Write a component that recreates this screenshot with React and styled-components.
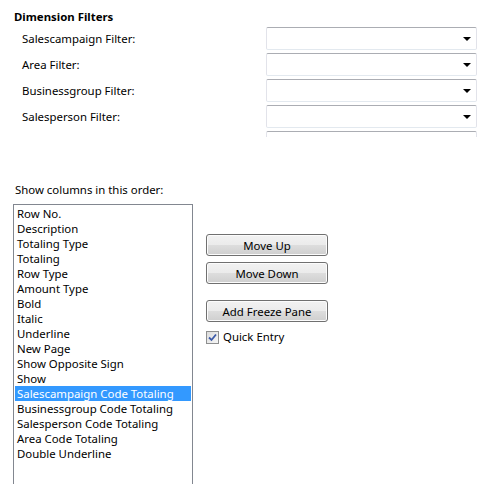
import React from "react";
import styled, { createGlobalStyle } from "styled-components";

const GlobalStyle = createGlobalStyle`
  html, body {
    margin: 0;
    padding: 0;
    background: #ffffff;
  }
  body {
    font-family: "Noto Sans", "Liberation Sans", sans-serif;
    font-size: 11.4px;
    color: #000000;
  }
`;

const Page = styled.div`
  width: 497px;
  height: 484px;
  overflow: hidden;
  position: relative;
`;

const Heading = styled.div`
  font-weight: bold;
  line-height: 16px;
  padding: 9px 0 0 14px;
`;

const FilterList = styled.div`
  display: flex;
  flex-direction: column;
  gap: 3px;
  margin-top: 2px;
`;

const FilterRow = styled.div`
  display: grid;
  grid-template-columns: 244px 211px;
  padding-left: 22px;
  height: ${(p) => (p.$clipped ? "6px" : "23px")};
  overflow: hidden;
  align-items: ${(p) => (p.$clipped ? "start" : "center")};
`;

const Label = styled.span`
  line-height: 16px;
`;

const SelectBox = styled.div`
  box-sizing: border-box;
  height: 23px;
  border: 1px solid #e2e3ea;
  border-top-color: #abadb3;
  border-bottom-color: #e3e9ef;
  border-radius: 2px;
  background: #ffffff;
  display: flex;
  align-items: center;
  justify-content: flex-end;
  padding-right: 5px;
`;

const Arrow = styled.span`
  width: 0;
  height: 0;
  border-left: 4px solid transparent;
  border-right: 4px solid transparent;
  border-top: 4px solid #000000;
  margin-top: 1px;
`;

const Caption = styled.div`
  line-height: 16px;
  padding-left: 15px;
  margin-top: 45px;
`;

const Lower = styled.div`
  display: flex;
  gap: 13px;
  margin-top: 6px;
  padding-left: 13px;
`;

const ListBox = styled.div`
  box-sizing: border-box;
  width: 180px;
  height: 300px;
  border: 1px solid #828790;
  padding: 1px 1px 0 1px;
  background: #ffffff;
`;

const ListItem = styled.div`
  height: 15px;
  line-height: 15px;
  padding-left: 2px;
  white-space: nowrap;
  background: ${(p) => (p.$selected ? "#3399ff" : "transparent")};
  color: ${(p) => (p.$selected ? "#ffffff" : "#000000")};
`;

const SideColumn = styled.div`
  display: flex;
  flex-direction: column;
  padding-top: 30px;
`;

const Button = styled.button`
  box-sizing: border-box;
  width: 122px;
  height: 22px;
  margin: 0 0 ${(p) => p.$gap || 0}px 0;
  padding: 0;
  font-family: inherit;
  font-size: 11.4px;
  color: #000000;
  border: 1px solid #707070;
  border-radius: 3px;
  background: linear-gradient(to bottom, #f2f2f2 0%, #ebebeb 50%, #dddddd 51%, #cfcfcf 100%);
  box-shadow: inset 0 0 0 1px #fcfcfc;
  cursor: pointer;
`;

const CheckRow = styled.label`
  display: flex;
  align-items: center;
  gap: 4px;
  margin-top: 7px;
  line-height: 16px;
`;

const CheckBox = styled.span`
  box-sizing: border-box;
  width: 13px;
  height: 13px;
  border: 1px solid #8e8f8f;
  background: linear-gradient(135deg, #dcdcdc 0%, #f6f6f6 100%);
  display: flex;
  align-items: center;
  justify-content: center;
`;

const filters = [
  "Salescampaign Filter:",
  "Area Filter:",
  "Businessgroup Filter:",
  "Salesperson Filter:",
];

const columns = [
  "Row No.",
  "Description",
  "Totaling Type",
  "Totaling",
  "Row Type",
  "Amount Type",
  "Bold",
  "Italic",
  "Underline",
  "New Page",
  "Show Opposite Sign",
  "Show",
  "Salescampaign Code Totaling",
  "Businessgroup Code Totaling",
  "Salesperson Code Totaling",
  "Area Code Totaling",
  "Double Underline",
];

export default function App() {
  return (
    <>
      <GlobalStyle />
      <Page>
        <Heading>Dimension Filters</Heading>
        <FilterList>
          {filters.map((f) => (
            <FilterRow key={f}>
              <Label>{f}</Label>
              <SelectBox>
                <Arrow />
              </SelectBox>
            </FilterRow>
          ))}
          <FilterRow $clipped>
            <Label />
            <SelectBox />
          </FilterRow>
        </FilterList>

        <Caption>Show columns in this order:</Caption>
        <Lower>
          <ListBox>
            {columns.map((c) => (
              <ListItem key={c} $selected={c === "Salescampaign Code Totaling"}>
                {c}
              </ListItem>
            ))}
          </ListBox>
          <SideColumn>
            <Button $gap={6}>Move Up</Button>
            <Button $gap={16}>Move Down</Button>
            <Button>Add Freeze Pane</Button>
            <CheckRow>
              <CheckBox>
                <svg width="9" height="9" viewBox="0 0 9 9">
                  <path d="M1 4.5 L3.5 7 L8 1.5" fill="none" stroke="#3c5aa8" strokeWidth="1.8" />
                </svg>
              </CheckBox>
              Quick Entry
            </CheckRow>
          </SideColumn>
        </Lower>
      </Page>
    </>
  );
}
